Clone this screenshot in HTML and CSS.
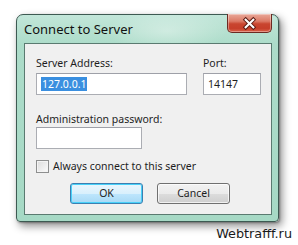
FILE: index.html
```html
<!DOCTYPE html>
<html>
<head>
<meta charset="utf-8">
<link rel="stylesheet" href="styles.css">
</head>
<body>
<div class="window">
  <div class="titlebar">
    <span class="title">Connect to Server</span>
    <div class="close">
      <svg width="45" height="19" viewBox="0 0 45 19">
        <path d="M18.5 5.5 L26.5 13.5 M26.5 5.5 L18.5 13.5" stroke="#5a1a12" stroke-width="4.2" stroke-linecap="square" fill="none"/>
        <path d="M18.5 5.5 L26.5 13.5 M26.5 5.5 L18.5 13.5" stroke="#ffffff" stroke-width="2.2" stroke-linecap="square" fill="none"/>
      </svg>
    </div>
  </div>
  <div class="client">
    <div class="row">
      <div class="field addr">
        <div class="label">Server Address:</div>
        <div class="input"><span class="sel">127.0.0.1</span></div>
      </div>
      <div class="field port">
        <div class="label">Port:</div>
        <div class="input">14147</div>
      </div>
    </div>
    <div class="field pw">
      <div class="label">Administration password:</div>
      <div class="input"></div>
    </div>
    <div class="check"><span class="box"></span><span>Always connect to this server</span></div>
    <div class="buttons">
      <div class="btn ok">OK</div>
      <div class="btn">Cancel</div>
    </div>
  </div>
</div>
<div class="watermark">Webtrafff.ru</div>
</body>
</html>
```
FILE: styles.css
```css
html, body {
  margin: 0;
  padding: 0;
  background: #ffffff;
}
body {
  width: 298px;
  height: 245px;
  overflow: hidden;
  font-family: "Noto Sans", "Open Sans", sans-serif;
  font-size: 10.5px;
  color: #1e1e1e;
}
.window {
  margin: 14px 0 0 16px;
  width: 263px;
  height: 208px;
  box-sizing: border-box;
  padding: 0 6px 6px 7px;
  border: 1px solid #3d5a52;
  border-radius: 7px 7px 4px 4px;
  background:
    radial-gradient(ellipse 60px 22px at 150px 16px, rgba(255,255,255,0.35), rgba(255,255,255,0) 100%),
    linear-gradient(180deg, #c2e6d9 0px, #acdcc9 30px, #a6d9c5 100%);
  box-shadow: 3px 4px 8px rgba(0,0,0,0.45), 1px 1px 2px rgba(0,0,0,0.3);
  display: flex;
  flex-direction: column;
}
.titlebar {
  height: 28px;
  display: flex;
  justify-content: space-between;
  align-items: flex-start;
}
.title {
  margin-top: 6px;
  font-size: 13px;
  line-height: 16px;
  color: #111;
}
.close {
  width: 45px;
  height: 19px;
  margin-top: -1px;
  box-sizing: border-box;
  border: 1px solid #6c2a22;
  border-top: none;
  border-radius: 0 0 5px 5px;
  background: linear-gradient(180deg, #e9a899 0%, #dc7a66 40%, #c9452f 55%, #c63f2a 80%, #d9634c 100%);
  box-shadow: inset 0 0 0 1px rgba(255,255,255,0.35);
  display: flex;
}
.close svg { display: block; }
.client {
  flex: 1;
  box-sizing: border-box;
  border: 1px solid #5a7a70;
  background: #f0f0f0;
  padding: 11px 11px 0 11px;
  display: flex;
  flex-direction: column;
}
.row {
  display: flex;
  gap: 16px;
}
.field {
  display: flex;
  flex-direction: column;
}
.label {
  line-height: 16px;
  height: 16px;
  margin-bottom: 2px;
  white-space: nowrap;
}
.input {
  height: 22px;
  box-sizing: border-box;
  border: 1px solid #abadb3;
  border-top-color: #9ea0a8;
  background: #ffffff;
  padding: 3px 4px 0 4px;
  line-height: 15px;
  white-space: nowrap;
}
.addr .input { width: 151px; }
.port .input { width: 58px; }
.pw { margin-top: 16px; }
.pw .label { margin-bottom: 0; }
.pw .input { width: 106px; }
.sel {
  background: #3a8fe0;
  color: #ffffff;
  padding: 0 1px;
}
.check {
  margin-top: 11px;
  display: flex;
  align-items: center;
  gap: 4px;
  line-height: 13px;
  white-space: nowrap;
}
.box {
  width: 13px;
  height: 13px;
  box-sizing: border-box;
  border: 1px solid #8e8f8f;
  background: linear-gradient(135deg, #dcdcdc, #fbfbfb);
  box-shadow: inset 0 0 0 1px #f4f4f4;
}
.buttons {
  margin-top: 10px;
  padding-left: 34px;
  display: flex;
  gap: 14px;
}
.btn {
  width: 73px;
  height: 21px;
  box-sizing: border-box;
  border: 1px solid #707070;
  border-radius: 3px;
  background: linear-gradient(180deg, #f2f2f2 0%, #ebebeb 50%, #dddddd 51%, #cfcfcf 100%);
  box-shadow: inset 0 0 0 1px rgba(255,255,255,0.7);
  display: flex;
  align-items: center;
  justify-content: center;
  line-height: 15px;
}
.btn.ok {
  border-color: #3c7fb1;
  background: linear-gradient(180deg, #eaf6fd 0%, #d9f0fc 50%, #bee6fd 51%, #a7d9f5 100%);
  box-shadow: inset 0 0 0 1px #48d1f9;
}
.watermark {
  margin-top: 4px;
  padding-right: 6px;
  text-align: right;
  font-family: "DejaVu Sans", Verdana, sans-serif;
  font-size: 12.8px;
  line-height: 16px;
  color: #1a1a1a;
}
```
